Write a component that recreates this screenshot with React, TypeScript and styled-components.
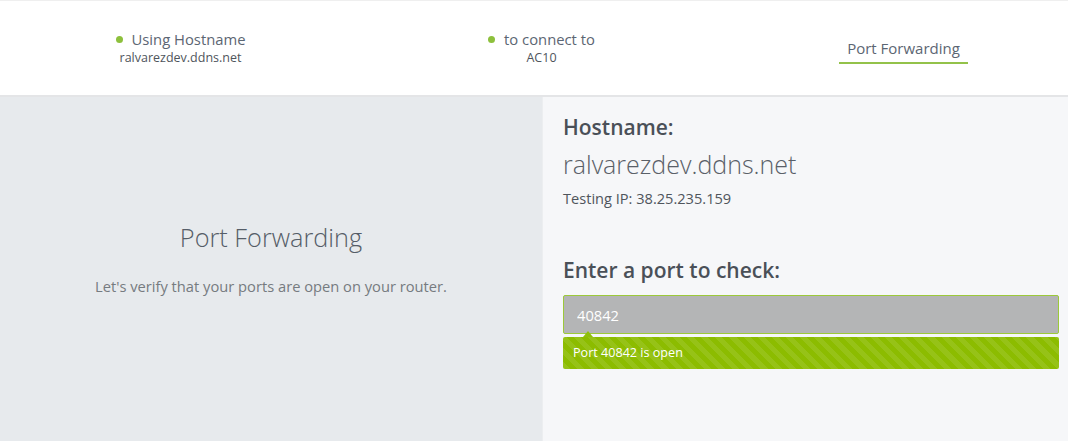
import React from "react";
import styled, { createGlobalStyle } from "styled-components";

const Global = createGlobalStyle`
  html, body { margin: 0; padding: 0; overflow: hidden; background: #ffffff; }
  body { font-family: "Open Sans", "Noto Sans", sans-serif; }
  * { box-sizing: border-box; }
`;

const Page = styled.div`
  width: 1084px;
  height: 441px;
  display: flex;
  flex-direction: column;
`;

const Header = styled.header`
  height: 97px;
  flex: none;
  background: #ffffff;
  border-top: 1px solid #efefef;
  border-bottom: 2px solid #e4e5e7;
  display: grid;
  grid-template-columns: repeat(3, 361px);
  align-items: start;
  padding-top: 28px;
`;

const Step = styled.div`
  display: flex;
  flex-direction: column;
  align-items: center;
`;

const StepTitle = styled.div`
  display: flex;
  align-items: center;
  gap: 9px;
  font-size: 14.8px;
  line-height: 20px;
  color: #5c6673;
`;

const Dot = styled.span`
  width: 7px;
  height: 7px;
  border-radius: 50%;
  background: #8dc03c;
`;

const StepSub = styled.div`
  font-size: 12.5px;
  line-height: 17px;
  color: #4f555c;
`;

const Tab = styled.div`
  justify-self: center;
  margin-top: 9px;
  margin-left: 2px;
  padding: 0 8px 4px;
  font-size: 15px;
  line-height: 20px;
  color: #5c6673;
  border-bottom: 2px solid #93c24a;
`;

const Body = styled.main`
  flex: 1;
  display: grid;
  grid-template-columns: 542px 1fr;
`;

const Intro = styled.section`
  background: #e7eaed;
  display: flex;
  flex-direction: column;
  align-items: center;
  padding-top: 124px;
`;

const IntroTitle = styled.h1`
  margin: 0;
  font-weight: 300;
  font-size: 25.3px;
  line-height: 32px;
  color: #555d67;
`;

const IntroText = styled.p`
  margin: 23px 0 0;
  font-size: 14.7px;
  line-height: 20px;
  color: #767b80;
`;

const Checker = styled.section`
  background: #f6f7f9;
  box-shadow: inset 1px 0 0 #eceef0;
  padding: 17px 25px 0 21px;
  display: flex;
  flex-direction: column;
`;

const Label = styled.h2<{ $gap?: number }>`
  margin: ${(p) => p.$gap ?? 0}px 0 0;
  font-weight: 600;
  font-size: 21px;
  line-height: 26px;
  color: #4a5058;
`;

const HostValue = styled.div`
  margin-top: 8px;
  font-weight: 300;
  font-size: 25px;
  line-height: 32px;
  color: #5a6068;
`;

const TestingIp = styled.div`
  margin-top: 8px;
  font-size: 14.6px;
  line-height: 20px;
  color: #4f555c;
`;

const PortInput = styled.input`
  margin-top: 12px;
  height: 39px;
  width: 100%;
  border: 1px solid #9cc93a;
  border-radius: 2px;
  background: #b4b5b6;
  color: #ffffff;
  font-family: inherit;
  font-size: 14.7px;
  padding: 0 13px;
  outline: none;
`;

const ResultWrap = styled.div`
  position: relative;
  margin-top: 3px;
`;

const Arrow = styled.span`
  position: absolute;
  left: 20px;
  top: -6px;
  width: 0;
  height: 0;
  border-left: 5px solid transparent;
  border-right: 5px solid transparent;
  border-bottom: 6px solid #8fbf0a;
`;

const Result = styled.div`
  height: 32px;
  border-radius: 2px;
  background-color: #8cbc00;
  background-image: repeating-linear-gradient(
    45deg,
    rgba(255, 255, 255, 0.09) 0 5px,
    transparent 5px 10px
  );
  color: #ffffff;
  font-size: 12.6px;
  line-height: 32px;
  padding-left: 10px;
`;

export default function App() {
  return (
    <Page>
      <Global />
      <Header>
        <Step>
          <StepTitle>
            <Dot />
            Using Hostname
          </StepTitle>
          <StepSub>ralvarezdev.ddns.net</StepSub>
        </Step>
        <Step>
          <StepTitle>
            <Dot />
            to connect to
          </StepTitle>
          <StepSub>AC10</StepSub>
        </Step>
        <Tab>Port Forwarding</Tab>
      </Header>
      <Body>
        <Intro>
          <IntroTitle>Port Forwarding</IntroTitle>
          <IntroText>Let's verify that your ports are open on your router.</IntroText>
        </Intro>
        <Checker>
          <Label>Hostname:</Label>
          <HostValue>ralvarezdev.ddns.net</HostValue>
          <TestingIp>Testing IP: 38.25.235.159</TestingIp>
          <Label $gap={49}>Enter a port to check:</Label>
          <PortInput defaultValue="40842" />
          <ResultWrap>
            <Arrow />
            <Result>Port 40842 is open</Result>
          </ResultWrap>
        </Checker>
      </Body>
    </Page>
  );
}
